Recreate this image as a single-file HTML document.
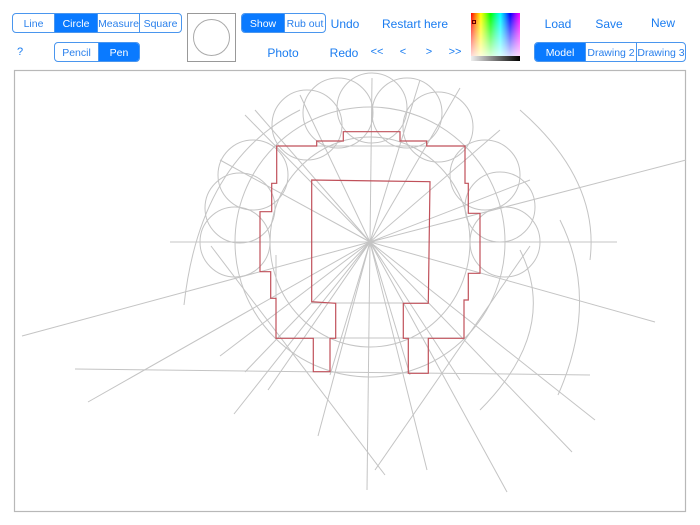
<!DOCTYPE html>
<html><head><meta charset="utf-8"><style>
*{margin:0;padding:0;box-sizing:border-box}
body{width:700px;height:525px;background:#fff;position:relative;overflow:hidden;font-family:"Liberation Sans",sans-serif;color:#1a7cf0}
.seg{position:absolute;display:flex;border:1px solid #4a96ee;border-radius:4px;overflow:hidden;height:20px}
.seg div{flex:none;font-size:10.5px;text-align:center;line-height:20px;height:18px;color:#2a80ec;border-left:1px solid #4a96ee}
.seg div:first-child{border-left:none}
.seg .on{background:#0a7aff;color:#fff}
.t{position:absolute;font-size:12px;color:#1a7cf0;transform:translateX(-50%);white-space:nowrap}
</style></head><body>
<div class="seg" style="left:12px;top:13px;width:170px">
<div style="width:41px">Line</div><div class="on" style="width:43px">Circle</div><div style="width:42px">Measure</div><div style="width:42px">Square</div></div>
<div class="seg" style="left:54px;top:42px;width:86px">
<div style="width:43px">Pencil</div><div class="on" style="width:41px">Pen</div></div>
<div class="seg" style="left:241px;top:13px;width:85px">
<div class="on" style="width:42px">Show</div><div style="width:41px">Rub out</div></div>
<div class="seg" style="left:534px;top:42px;width:152px">
<div class="on" style="width:50px">Model</div><div style="width:51px">Drawing 2</div><div style="width:49px">Drawing 3</div></div>
<div style="position:absolute;left:187px;top:13px;width:49px;height:49px;border:1px solid #999"></div>
<div style="position:absolute;left:193px;top:19px;width:37px;height:37px;border:1px solid #aaa;border-radius:50%"></div>
<div class="t" style="left:20px;top:46px;font-size:11px">?</div>
<div class="t" style="left:345px;top:17px">Undo</div>
<div class="t" style="left:415px;top:17px">Restart here</div>
<div class="t" style="left:283px;top:46px">Photo</div>
<div class="t" style="left:344px;top:46px">Redo</div>
<div class="t" style="left:377px;top:46px;font-size:11px">&lt;&lt;</div>
<div class="t" style="left:403px;top:46px;font-size:11px">&lt;</div>
<div class="t" style="left:429px;top:46px;font-size:11px">&gt;</div>
<div class="t" style="left:455px;top:46px;font-size:11px">&gt;&gt;</div>
<div class="t" style="left:558px;top:17px">Load</div>
<div class="t" style="left:609px;top:17px">Save</div>
<div class="t" style="left:663px;top:16px">New</div>
<div style="position:absolute;left:471px;top:13px;width:49px;height:43px;background:linear-gradient(to bottom,rgba(255,255,255,0),rgba(255,255,255,.85)),linear-gradient(to right,#f00,#f80,#ff0,#8f0,#0f0,#0f8,#0ff,#08f,#00f,#80f,#f0f)"></div>
<div style="position:absolute;left:471px;top:56px;width:49px;height:5px;background:linear-gradient(to right,#eee,#000)"></div>
<div style="position:absolute;left:472px;top:20px;width:4px;height:4px;border:1px solid #600"></div>
<svg style="position:absolute;left:0;top:0" width="700" height="525">
<rect x="14.5" y="70.5" width="671" height="441" fill="none" stroke="#b8b8b8" stroke-width="1.2"/>
<g fill="none" stroke="#c4c4c4" stroke-width="1">
<circle cx="370" cy="242" r="135"/>
<ellipse cx="370" cy="242" rx="100" ry="105"/>
<circle cx="372" cy="108" r="35"/><circle cx="338" cy="113" r="35"/><circle cx="407" cy="113" r="35"/>
<circle cx="307" cy="125" r="35"/><circle cx="438" cy="127" r="35"/>
<circle cx="253" cy="175" r="35"/><circle cx="485" cy="175" r="35"/>
<circle cx="240" cy="208" r="35"/><circle cx="500" cy="207" r="35"/>
<circle cx="235" cy="242" r="35"/><circle cx="505" cy="242" r="35"/>
<path d="M184 305 Q200 160 300 110"/><path d="M590 260 Q600 180 520 110"/>
<path d="M558 395 Q600 300 560 220"/><path d="M480 410 Q560 330 520 250"/>
<line x1="170" y1="242" x2="617" y2="242"/>
<line x1="75" y1="369" x2="590" y2="375"/>
<line x1="370" y1="242" x2="22" y2="336"/>
<line x1="370" y1="242" x2="88" y2="402"/>
<line x1="370" y1="242" x2="220" y2="356"/>
<line x1="370" y1="242" x2="234" y2="414"/>
<line x1="370" y1="242" x2="268" y2="390"/>
<line x1="370" y1="242" x2="318" y2="436"/>
<line x1="370" y1="242" x2="367" y2="490"/>
<line x1="370" y1="242" x2="427" y2="470"/>
<line x1="370" y1="242" x2="507" y2="492"/>
<line x1="370" y1="242" x2="572" y2="452"/>
<line x1="370" y1="242" x2="595" y2="420"/>
<line x1="370" y1="242" x2="655" y2="322"/>
<line x1="370" y1="242" x2="686" y2="160"/>
<line x1="370" y1="242" x2="460" y2="88"/>
<line x1="370" y1="242" x2="372" y2="78"/>
<line x1="370" y1="242" x2="300" y2="95"/>
<line x1="370" y1="242" x2="245" y2="115"/>
<line x1="370" y1="242" x2="220" y2="160"/>
<line x1="370" y1="242" x2="255" y2="110"/>
<line x1="370" y1="242" x2="420" y2="80"/>
<line x1="370" y1="242" x2="500" y2="130"/>
<line x1="370" y1="242" x2="530" y2="180"/>
<line x1="370" y1="242" x2="245" y2="372"/>
<line x1="370" y1="242" x2="460" y2="380"/>
<line x1="370" y1="242" x2="410" y2="375"/>
<line x1="370" y1="242" x2="330" y2="375"/>
<line x1="211" y1="246" x2="385" y2="475"/>
<line x1="530" y1="246" x2="375" y2="470"/>
<line x1="276" y1="146" x2="465" y2="146"/>
<line x1="276" y1="338" x2="464" y2="338"/>
<line x1="312" y1="303" x2="428" y2="303"/>
<line x1="276" y1="255" x2="276" y2="338"/>
</g>
<path fill="none" stroke="#c0505a" stroke-width="1.2" d="M276.7 146 L316.7 146 L316.7 141 L343.3 141 L343.3 131.7 L400 131.7 L400 141 L426.7 141 L426.7 146 L465 146 L465 183.3 L468.3 183.3 L468.3 213.3 L480 213.3 L480 273.3 L468.3 273.3 L468.3 300 L464 300 L464 338.3 L428.3 338.3 L428.3 373.3 L408.3 373.3 L408.3 338.3 L403.3 338.3 L403.3 303.3 L428.3 303.3 L430 181.7 L311.7 180 L311.7 301.7 L335.7 303.3 L335.7 338.3 L330 338.3 L330 371.7 L313.3 371.7 L313.3 338.3 L276 338.3 L276 298.3 L270.7 298.3 L270.7 271.7 L260 271.7 L260 211.7 L271.7 211.7 L271.7 183.3 L276.7 183.3 Z"/>
</svg>
</body></html>
